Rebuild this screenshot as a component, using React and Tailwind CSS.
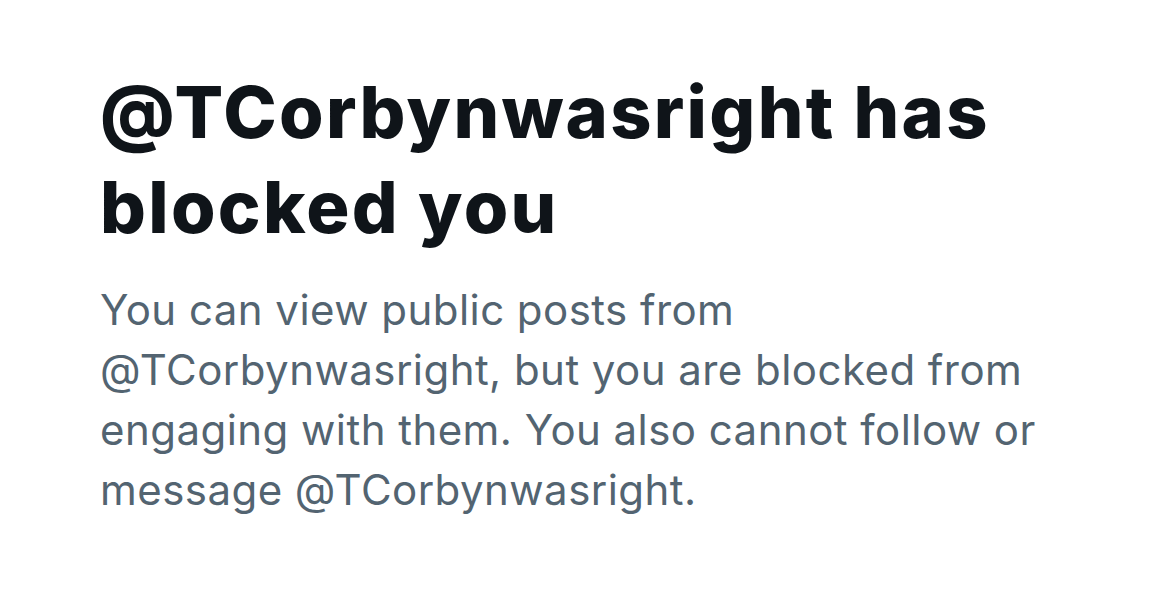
export default function App() {
  return (
    <div className="w-[1170px] h-[611px] bg-white overflow-hidden" style={{ fontFamily: 'Inter, "Noto Sans", sans-serif' }}>
      <div className="pl-[100px] pr-[60px] pt-[64px]">
        <h1 className="text-[72px] leading-[95px] font-extrabold text-[#0f1419] tracking-[2.3px]">
          @TCorbynwasright has blocked you
        </h1>
        <p className="mt-[26px] text-[42px] leading-[60px] text-[#536471] tracking-[0.45px] w-[960px]">
          You can view public posts from @TCorbynwasright, but you are blocked from engaging with them. You also cannot follow or message @TCorbynwasright.
        </p>
      </div>
    </div>
  );
}
